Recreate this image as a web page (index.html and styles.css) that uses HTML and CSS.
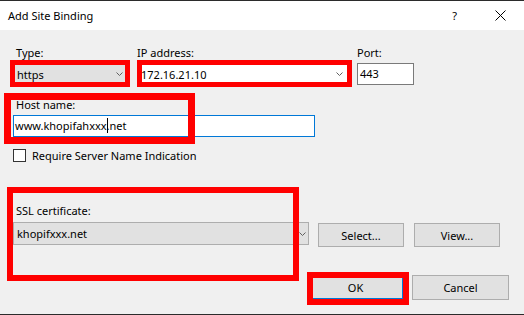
FILE: index.html
```html
<!DOCTYPE html>
<html lang="en">
<head>
  <meta charset="UTF-8">
  <title>Add Site Binding</title>
  <link rel="stylesheet" href="styles.css">
</head>
<body>

  <div class="window">
    <div class="titlebar">
      <span class="title">Add Site Binding</span>
      <span class="help">?</span>
      <svg class="close" width="11" height="11" viewBox="0 0 11 11">
        <path d="M0.5 0.5 L10.5 10.5 M10.5 0.5 L0.5 10.5" stroke="#000" stroke-width="1" fill="none"/>
      </svg>
    </div>

    <div class="content">
      <div class="row top-row">
        <div class="field type-field">
          <label>Type:</label>
          <div class="combo readonly">
            <span>https</span>
            <svg class="chev" width="7" height="4" viewBox="0 0 7 4"><polyline points="0.5,0.5 3.5,3.5 6.5,0.5" stroke="#606060" fill="none"/></svg>
          </div>
        </div>
        <div class="field ip-field">
          <label>IP address:</label>
          <div class="combo editable">
            <span>172.16.21.10</span>
            <svg class="chev" width="7" height="4" viewBox="0 0 7 4"><polyline points="0.5,0.5 3.5,3.5 6.5,0.5" stroke="#606060" fill="none"/></svg>
          </div>
        </div>
        <div class="field port-field">
          <label>Port:</label>
          <div class="textbox">443</div>
        </div>
      </div>

      <div class="field host-field">
        <label>Host name:</label>
        <div class="textbox focused">www.khopifahxxx<span class="caret"></span>.net</div>
      </div>

      <div class="check">
        <span class="box"></span>
        <span>Require Server Name Indication</span>
      </div>

      <label class="ssl-label">SSL certificate:</label>
      <div class="row ssl-row">
        <div class="combo readonly ssl-combo">
          <span>khopifxxx.net</span>
          <svg class="chev" width="7" height="4" viewBox="0 0 7 4"><polyline points="0.5,0.5 3.5,3.5 6.5,0.5" stroke="#606060" fill="none"/></svg>
        </div>
        <button class="btn small">Select...</button>
        <button class="btn small">View...</button>
      </div>

      <div class="row actions">
        <button class="btn wide default">OK</button>
        <button class="btn wide">Cancel</button>
      </div>
    </div>

    <!-- red annotation boxes -->
    <div class="mark mark-type"></div>
    <div class="mark mark-ip"></div>
    <div class="mark mark-host"></div>
    <div class="mark mark-ssl"></div>
    <div class="mark mark-ok"></div>
  </div>

</body>
</html>
```

FILE: styles.css
```css
body {
  margin: 0;
  background: #f0f0f0;
  font-family: "Noto Sans", "Open Sans", sans-serif;
  font-size: 11px;
  color: #000;
}
.window {
  position: relative;
  width: 524px;
  height: 315px;
  box-sizing: border-box;
  border-top: 1px solid #2b2b2b;
  border-bottom: 1px solid #2b2b2b;
  background: #f0f0f0;
}
.titlebar {
  display: flex;
  align-items: center;
  height: 29px;
  background: #fff;
  padding-left: 8px;
}
.title {
  flex: 1;
}
.help {
  margin-right: 38px;
}
.close {
  margin-right: 18px;
}
.content {
  padding-left: 13px;
}
.row {
  display: flex;
  align-items: flex-start;
}
label {
  display: block;
  line-height: 16px;
  margin-bottom: 2px;
}
.top-row {
  margin-top: 15px;
}
.type-field label {
  padding-left: 3px;
}
.type-field {
  width: 117px;
}
.ip-field {
  width: 213px;
  margin-left: 7px;
}
.port-field {
  width: 57px;
  margin-left: 7px;
}
.combo {
  display: flex;
  align-items: center;
  justify-content: space-between;
  height: 22px;
  box-sizing: border-box;
  padding: 0 6px 0 3px;
}
.combo.readonly {
  background: #e1e1e1;
  border: 1px solid #adadad;
}
.combo.editable {
  background: #fff;
  border: 1px solid #7a7a7a;
}
.chev {
  display: block;
}
.textbox {
  height: 22px;
  line-height: 20px;
  box-sizing: border-box;
  background: #fff;
  border: 1px solid #7a7a7a;
  padding-left: 2px;
}
.textbox.focused {
  border-color: #0078d7;
  padding-left: 1px;
}
.caret {
  display: inline-block;
  width: 1px;
  height: 15px;
  margin-right: -1px;
  background: #000;
  vertical-align: -3px;
}
.host-field {
  margin-top: 12px;
  width: 302px;
}
.host-field label {
  padding-left: 3px;
}
.check {
  display: flex;
  align-items: center;
  height: 13px;
  margin-top: 12px;
}
.box {
  width: 13px;
  height: 13px;
  box-sizing: border-box;
  border: 1px solid #333;
  background: #fff;
  margin-right: 6px;
}
.ssl-label {
  margin-top: 41px;
  margin-bottom: 3px;
  padding-left: 3px;
}
.ssl-combo {
  width: 296px;
  height: 23px;
  padding-right: 2px;
}
.btn {
  font: inherit;
  color: #000;
  background: #e1e1e1;
  border: 1px solid #adadad;
  padding: 0;
  box-sizing: border-box;
}
.btn.small {
  width: 86px;
  height: 24px;
  margin-top: 1px;
  margin-left: 9px;
}
.btn.small + .btn.small {
  margin-left: 10px;
}
.actions {
  margin-top: 28px;
  padding-left: 294px;
}
.btn.wide {
  width: 97px;
  height: 25px;
}
.btn.wide + .btn.wide {
  margin-left: 8px;
}
.btn.default {
  border: 2px solid #0078d7;
}
.mark {
  position: absolute;
  box-sizing: border-box;
  border: 5px solid #ff0000;
}
.mark-type {
  left: 10px;
  top: 59px;
  width: 120px;
  height: 27px;
}
.mark-ip {
  left: 137px;
  top: 59px;
  width: 215px;
  height: 27px;
}
.mark-host {
  left: 4px;
  top: 92px;
  width: 191px;
  height: 51px;
  border-width: 7px;
}
.mark-ssl {
  left: 7px;
  top: 186px;
  width: 292px;
  height: 94px;
  border-width: 6px;
}
.mark-ok {
  left: 307px;
  top: 271px;
  width: 102px;
  height: 33px;
  border-width: 6px;
}
```
